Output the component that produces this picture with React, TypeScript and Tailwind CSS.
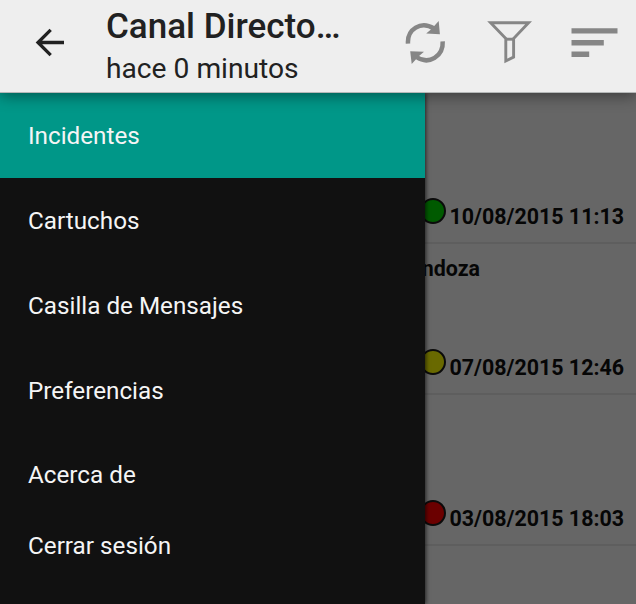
const menu = [
  { label: "Incidentes", style: "h-[85px] bg-[#009788]" },
  { label: "Cartuchos", style: "h-[85px]" },
  { label: "Casilla de Mensajes", style: "h-[85px]" },
  { label: "Preferencias", style: "h-[84px]" },
  { label: "Acerca de", style: "h-[85px]" },
  { label: "Cerrar sesión", style: "h-[57px]" },
];

const incidents = [
  { date: "10/08/2015 11:13", dot: "bg-[#005a00]", place: "" },
  { date: "07/08/2015 12:46", dot: "bg-[#696900]", place: "Mendoza" },
  { date: "03/08/2015 18:03", dot: "bg-[#6b0000]", place: "" },
];

function Header() {
  return (
    <header className="relative z-20 flex h-[93px] shrink-0 items-start border-b border-[#b5b8b8] bg-[#eeeeee] text-[#212121] shadow-[0_3px_14px_rgba(0,0,0,0.42)]">
      <svg className="ml-[35px] mt-[28px] h-[30px] w-[30px]" viewBox="0 0 30 30" fill="none" stroke="#212121" strokeWidth="3.3">
        <path d="M29 14.5H3M15.7 1.8L3 14.5L15.7 27.2" />
      </svg>
      <div className="ml-[41px] flex w-[260px] flex-col whitespace-nowrap pt-[6px]">
        <h1 className="text-[35px] font-medium leading-[42px]">Canal Directo…</h1>
        <p className="text-[28.2px] leading-[42px]">hace 0 minutos</p>
      </div>
      <svg className="ml-[38px] mt-[20px] h-[46px] w-[42px]" viewBox="404 20 42 46">
        <g fill="none" stroke="#868686" strokeWidth="4.5">
          <path d="M408 43.7C407 29 421 20.500 434 28.500" />
          <path d="M442.700 41.300C443.500 56 429 65.500 416.500 57" />
        </g>
        <path d="M438.7 21L439.900 34.200L426.2 33.500L431.5 29ZM410.2 51.2L424 51.8L419 56L411.700 64Z" fill="#868686" />
      </svg>
      <svg className="ml-[41px] mt-[19px] h-[46px] w-[46px]" viewBox="487 19 46 46" fill="none" stroke="#868686" strokeWidth="2.900">
        <path d="M490.6 22.8H528.600L513.600 38.500V57L505.800 61V38.5Z" />
        <path d="M505 39.2H514.500" />
      </svg>
      <svg className="ml-[38px] mt-[26px] h-[34px] w-[48px]" viewBox="571 26 48 34" fill="#868686">
        <path d="M571.5 28.3H617.5V33.6H571.5ZM571.5 39.9H603.8V45.5H571.5ZM571.5 51.6H589.2V57H571.5Z" />
      </svg>
    </header>
  );
}

function Incidents() {
  return (
    <ul className="h-full text-[21.4px] font-bold text-[#060606]">
      {incidents.map((item) => (
        <li key={item.date} className="flex h-[151px] flex-col justify-between border-b-2 border-[#5e5e5e] pr-[12px]">
          <p className="h-[26px] pl-[391.5px] pt-[12px] leading-[26px]">{item.place}</p>
          <div className="flex items-start justify-end gap-[4px] pb-[12px]">
            <i className={"h-[26px] w-[26px] rounded-full border-2 border-[#0b0b0b] " + item.dot} />
            <span className="pt-[6px] leading-[26px]">{item.date}</span>
          </div>
        </li>
      ))}
    </ul>
  );
}

export default function App() {
  return (
    <div className="flex h-[604px] w-[636px] flex-col overflow-hidden bg-[#666666] font-['Roboto',sans-serif]">
      <Header />
      <main className="relative h-[511px]">
        <Incidents />
        <nav className="absolute inset-y-0 left-0 z-10 w-[425px] bg-[#111111] shadow-[1px_0_4px_rgba(0,0,0,0.65)]">
          {menu.map((item) => (
            <a key={item.label} className={"flex items-center pl-[28px] pt-[2px] text-[24.25px] text-[#f5f5f5] " + item.style}>
              {item.label}
            </a>
          ))}
        </nav>
      </main>
    </div>
  );
}
